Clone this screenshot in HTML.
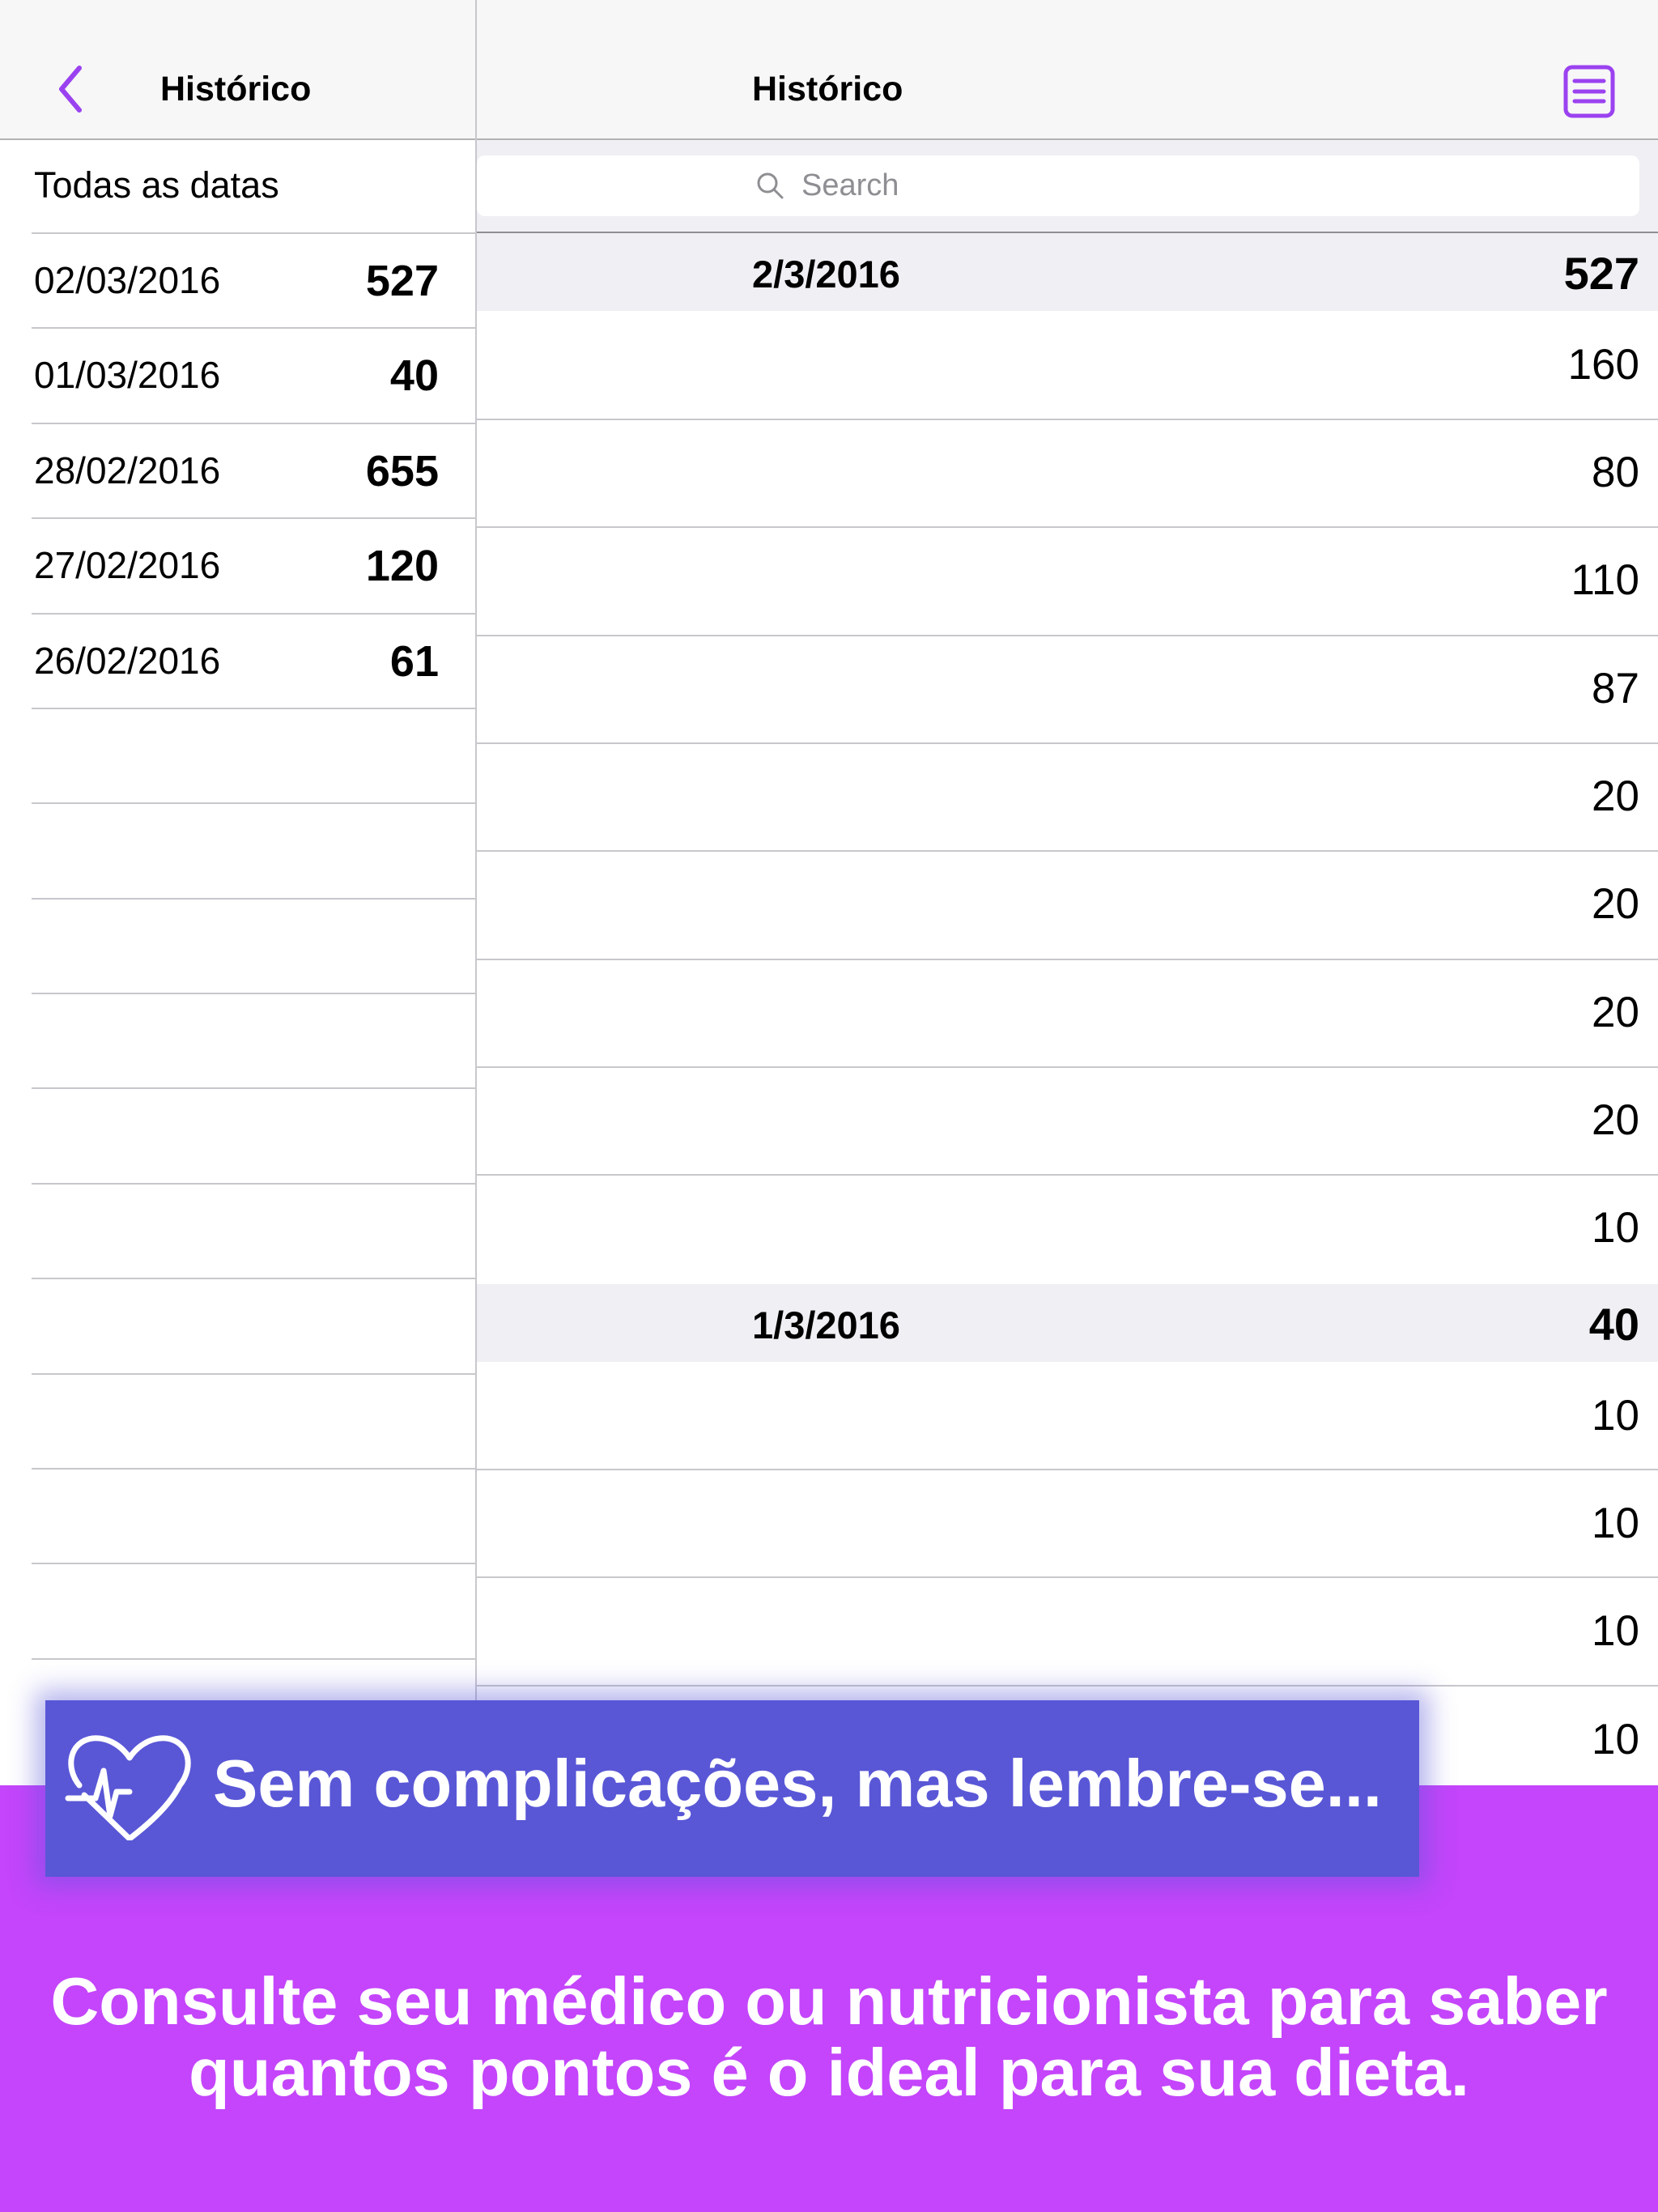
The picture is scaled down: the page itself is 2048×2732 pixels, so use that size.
<!DOCTYPE html>
<html><head><meta charset="utf-8"><style>
*{margin:0;padding:0;box-sizing:border-box}
body{width:2048px;height:2732px;position:relative;overflow:hidden;background:#fff;font-family:"Liberation Sans",sans-serif;color:#000}
.a{position:absolute}
.hl{position:absolute;height:2px;background:#c8c7cc}
.t{position:absolute;white-space:nowrap}
.d{font-size:46px}
</style></head><body>
<div class="a" style="left:0;top:0;width:2048px;height:172px;background:#f7f7f7"></div>
<div class="a" style="left:0;top:171px;width:2048px;height:2px;background:#b2b2b2"></div>
<div class="a" style="left:587px;top:0;width:2px;height:2205px;background:#c8c7cc"></div>
<svg class="a" style="left:66px;top:80px" width="40" height="60" viewBox="0 0 40 60"><path d="M32 4 L10 30 L32 56" fill="none" stroke="#9b42f0" stroke-width="6" stroke-linecap="round" stroke-linejoin="round"/></svg>
<div class="t" style="left:198px;top:86px;font-size:43px;font-weight:bold">Histórico</div>
<div class="t" style="left:929px;top:86px;font-size:43px;font-weight:bold">Histórico</div>
<svg class="a" style="left:1931px;top:80px" width="64" height="66" viewBox="0 0 64 66"><rect x="3" y="3" width="58" height="60" rx="8" fill="none" stroke="#9b42f0" stroke-width="5"/><path d="M14 20H50M14 33H50M14 45H50" stroke="#9b42f0" stroke-width="5" stroke-linecap="round"/></svg>

<div class="t" style="left:42px;top:203px;font-size:45px">Todas as datas</div>
<div class="a" style="left:589px;top:173px;width:1459px;height:115px;background:#efeff4"></div>
<div class="a" style="left:589px;top:192px;width:1436px;height:75px;background:#fff;border-radius:10px"></div>
<svg class="a" style="left:934px;top:212px" width="36" height="36" viewBox="0 0 36 36"><circle cx="14" cy="14" r="11" fill="none" stroke="#8e8e93" stroke-width="3"/><path d="M22 22L32 32" stroke="#8e8e93" stroke-width="3" stroke-linecap="round"/></svg>
<div class="t" style="left:990px;top:208px;font-size:38px;color:#8e8e93">Search</div>
<div class="a" style="left:589px;top:286px;width:1459px;height:2px;background:#8e8e93"></div>

<div class="hl" style="left:39px;top:287px;width:548px"></div>
<div class="t d" style="left:42px;top:319px">02/03/2016</div><div class="t" style="right:1506px;top:316px;font-size:54px;font-weight:bold">527</div>
<div class="hl" style="left:39px;top:404px;width:548px"></div>
<div class="t d" style="left:42px;top:436px">01/03/2016</div><div class="t" style="right:1506px;top:433px;font-size:54px;font-weight:bold">40</div>
<div class="hl" style="left:39px;top:522px;width:548px"></div>
<div class="t d" style="left:42px;top:554px">28/02/2016</div><div class="t" style="right:1506px;top:551px;font-size:54px;font-weight:bold">655</div>
<div class="hl" style="left:39px;top:639px;width:548px"></div>
<div class="t d" style="left:42px;top:671px">27/02/2016</div><div class="t" style="right:1506px;top:668px;font-size:54px;font-weight:bold">120</div>
<div class="hl" style="left:39px;top:757px;width:548px"></div>
<div class="t d" style="left:42px;top:789px">26/02/2016</div><div class="t" style="right:1506px;top:786px;font-size:54px;font-weight:bold">61</div>
<div class="hl" style="left:39px;top:874px;width:548px"></div>
<div class="hl" style="left:39px;top:991px;width:548px"></div>
<div class="hl" style="left:39px;top:1109px;width:548px"></div>
<div class="hl" style="left:39px;top:1226px;width:548px"></div>
<div class="hl" style="left:39px;top:1343px;width:548px"></div>
<div class="hl" style="left:39px;top:1461px;width:548px"></div>
<div class="hl" style="left:39px;top:1578px;width:548px"></div>
<div class="hl" style="left:39px;top:1696px;width:548px"></div>
<div class="hl" style="left:39px;top:1813px;width:548px"></div>
<div class="hl" style="left:39px;top:1930px;width:548px"></div>
<div class="hl" style="left:39px;top:2048px;width:548px"></div>

<div class="a" style="left:589px;top:288px;width:1459px;height:96px;background:#efeff4"></div>
<div class="t" style="left:929px;top:311px;font-size:47px;font-weight:bold">2/3/2016</div>
<div class="t" style="right:23px;top:305px;font-size:56px;font-weight:bold">527</div>
<div class="t" style="right:23px;top:420px;font-size:53px">160</div>
<div class="hl" style="left:589px;top:517px;width:1459px"></div>
<div class="t" style="right:23px;top:553px;font-size:53px">80</div>
<div class="hl" style="left:589px;top:650px;width:1459px"></div>
<div class="t" style="right:23px;top:686px;font-size:53px">110</div>
<div class="hl" style="left:589px;top:784px;width:1459px"></div>
<div class="t" style="right:23px;top:820px;font-size:53px">87</div>
<div class="hl" style="left:589px;top:917px;width:1459px"></div>
<div class="t" style="right:23px;top:953px;font-size:53px">20</div>
<div class="hl" style="left:589px;top:1050px;width:1459px"></div>
<div class="t" style="right:23px;top:1086px;font-size:53px">20</div>
<div class="hl" style="left:589px;top:1184px;width:1459px"></div>
<div class="t" style="right:23px;top:1220px;font-size:53px">20</div>
<div class="hl" style="left:589px;top:1317px;width:1459px"></div>
<div class="t" style="right:23px;top:1353px;font-size:53px">20</div>
<div class="hl" style="left:589px;top:1450px;width:1459px"></div>
<div class="t" style="right:23px;top:1486px;font-size:53px">10</div>
<div class="a" style="left:589px;top:1586px;width:1459px;height:96px;background:#efeff4"></div>
<div class="t" style="left:929px;top:1609px;font-size:47px;font-weight:bold">1/3/2016</div>
<div class="t" style="right:23px;top:1603px;font-size:56px;font-weight:bold">40</div>
<div class="t" style="right:23px;top:1718px;font-size:53px">10</div>
<div class="hl" style="left:589px;top:1814px;width:1459px"></div>
<div class="t" style="right:23px;top:1851px;font-size:53px">10</div>
<div class="hl" style="left:589px;top:1947px;width:1459px"></div>
<div class="t" style="right:23px;top:1984px;font-size:53px">10</div>
<div class="hl" style="left:589px;top:2081px;width:1459px"></div>
<div class="t" style="right:23px;top:2118px;font-size:53px">10</div>

<div class="a" style="left:0;top:2205px;width:2048px;height:527px;background:#c445fb"></div>
<div class="a" style="left:56px;top:2100px;width:1697px;height:218px;background:#5957d6;box-shadow:0 0 30px 12px rgba(89,87,214,0.45)"></div>
<svg class="a" style="left:80px;top:2143px" width="160" height="130" viewBox="0 0 160 130"><path d="M80 128 L24 74 M18 62 C0 40 6 8 34 4 C56 2 72 16 80 28 C88 16 104 2 126 4 C154 8 160 40 142 62 C130 86 106 108 80 128" fill="none" stroke="#fff" stroke-width="7" stroke-linecap="round" stroke-linejoin="round"/><path d="M4 78 H38 L48 44 L56 100 L64 70 H80" fill="none" stroke="#fff" stroke-width="7" stroke-linecap="round" stroke-linejoin="round"/></svg>
<div class="t" style="left:263px;top:2155px;font-size:83px;font-weight:bold;color:#fff">Sem complicações, mas lembre-se...</div>
<div class="a" style="left:0;top:2428px;width:2048px;text-align:center;font-size:83px;font-weight:bold;color:#fff;line-height:88px">Consulte seu médico ou nutricionista para saber<br>quantos pontos é o ideal para sua dieta.</div>
</body></html>
